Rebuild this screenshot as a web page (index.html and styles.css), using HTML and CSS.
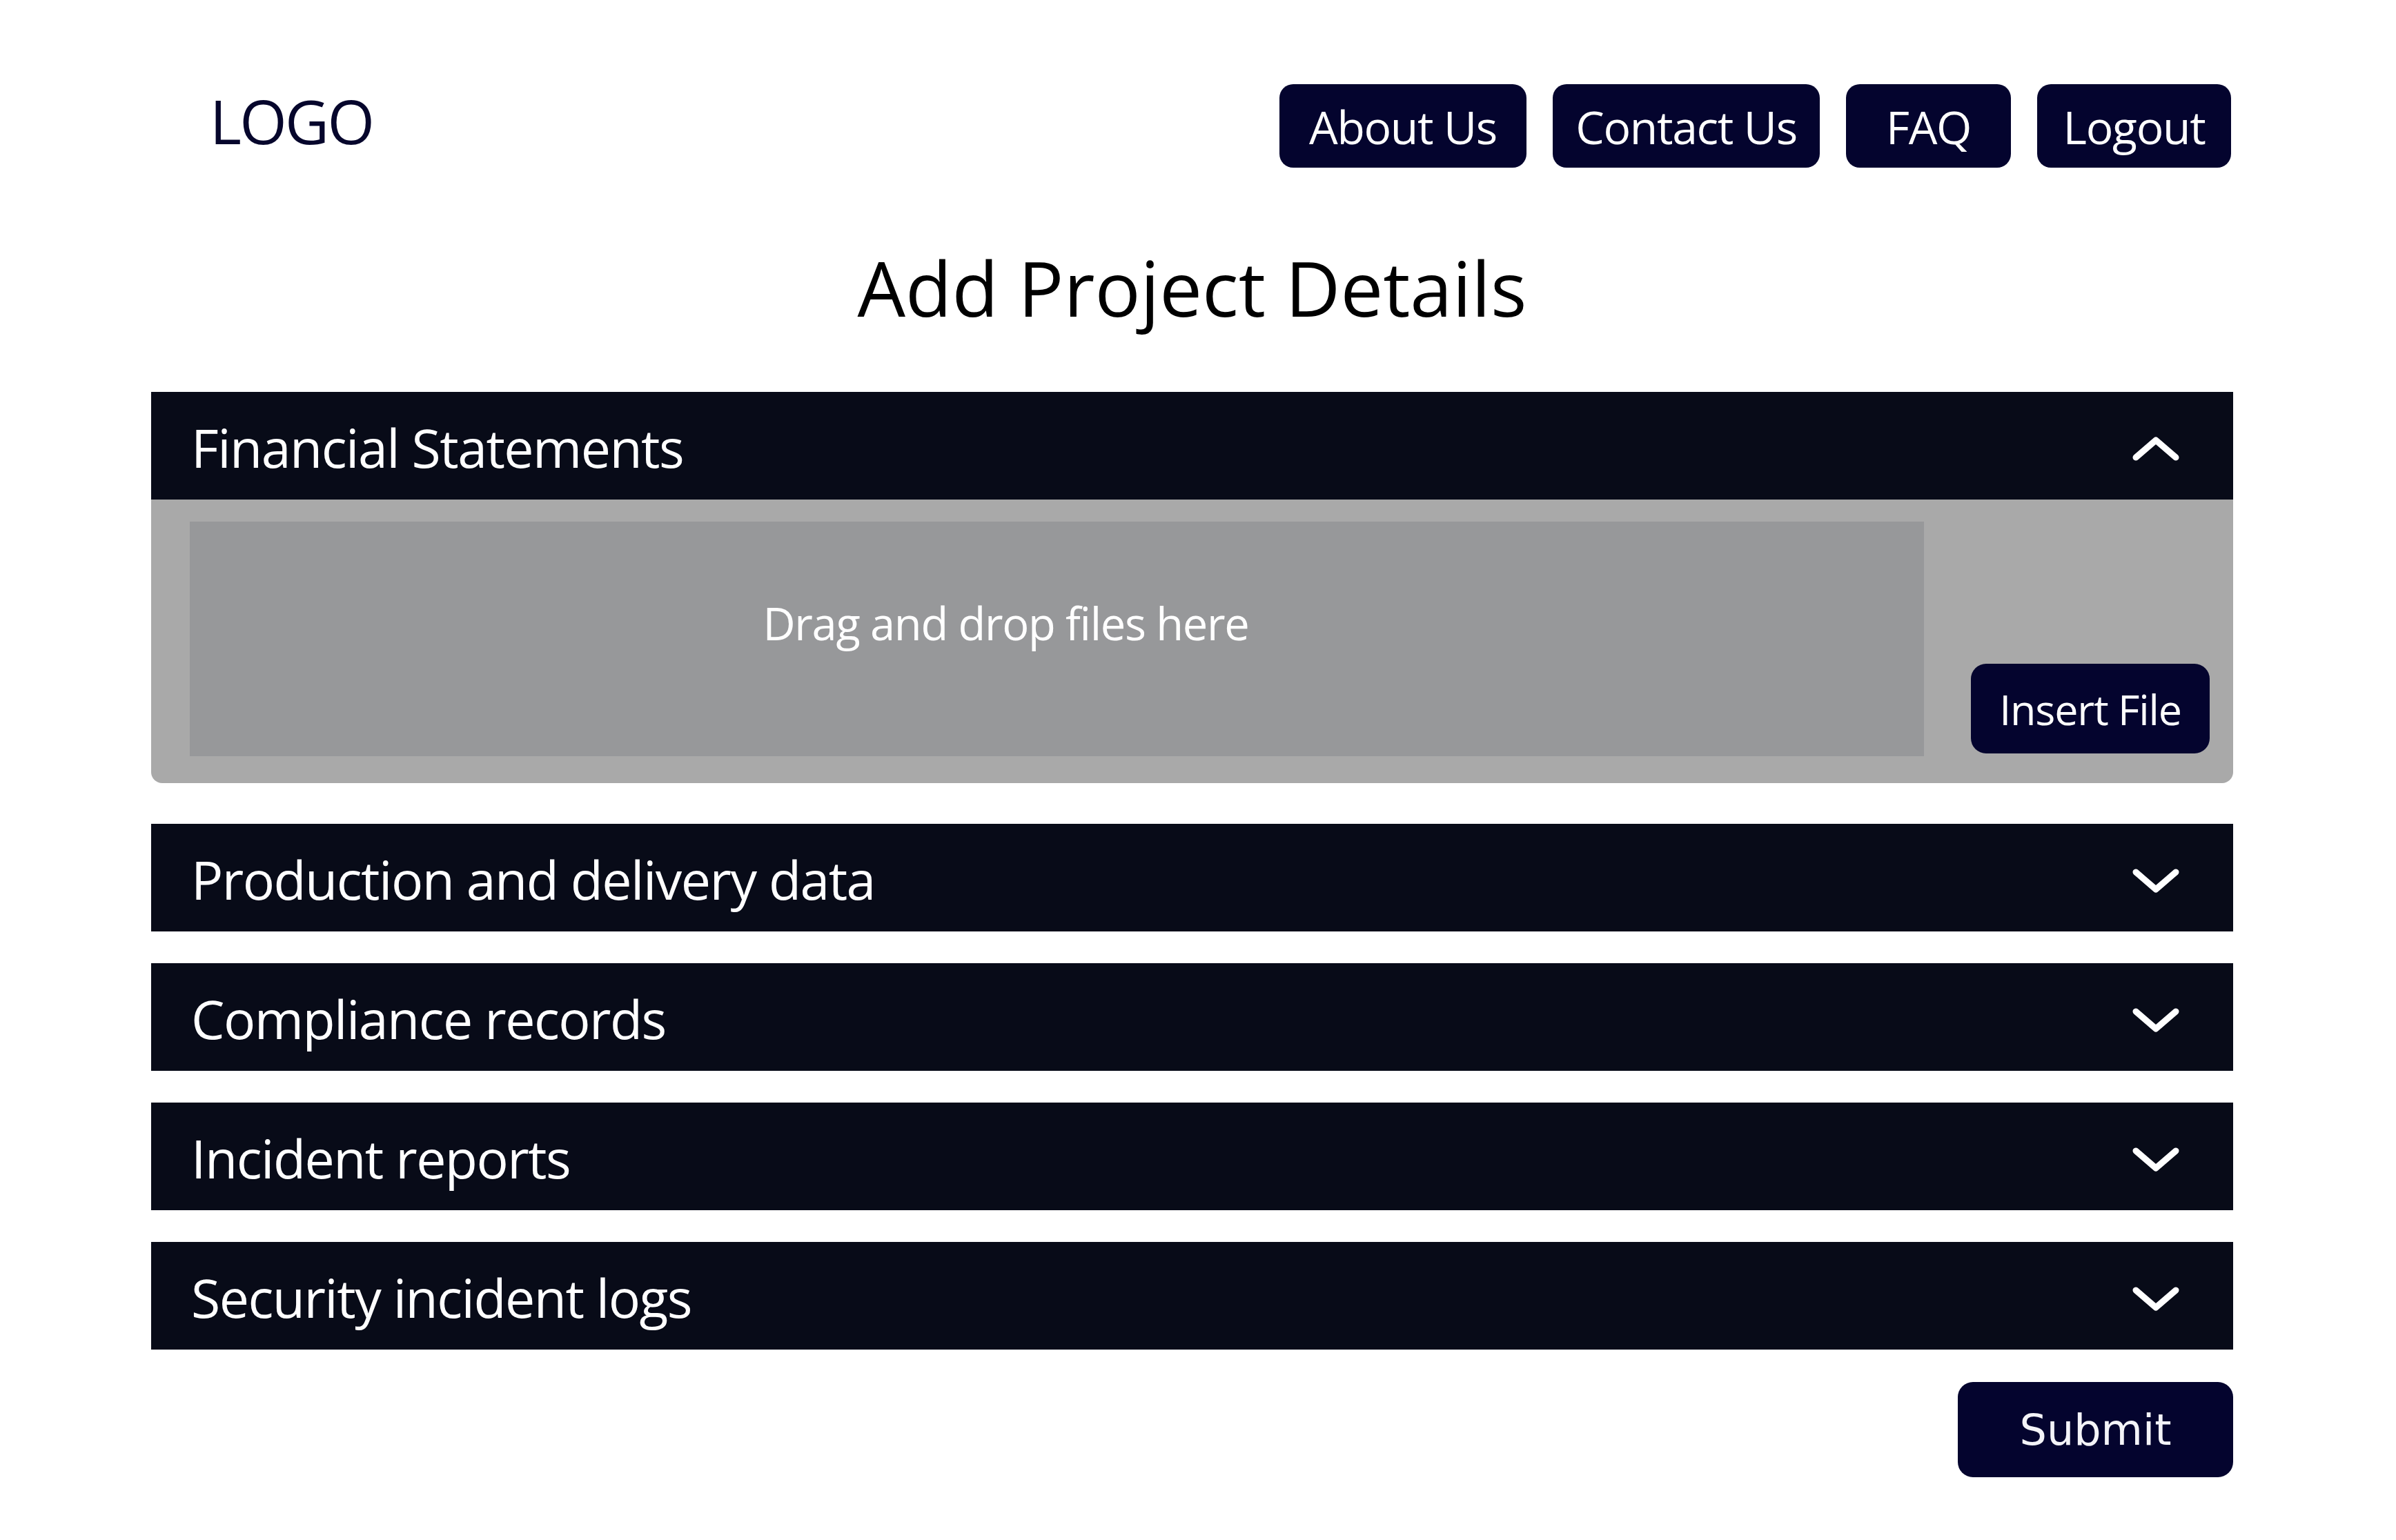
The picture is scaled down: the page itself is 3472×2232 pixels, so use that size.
FILE: index.html
```html
<!DOCTYPE html>
<html lang="en">
<head>
  <meta charset="utf-8">
  <meta name="viewport" content="width=device-width, initial-scale=1.0">
  <title>Add Project Details</title>
  <link rel="stylesheet" href="styles.css">
</head>
<body>
  <div class="page">
    <header class="top-bar">
      <div class="logo">LOGO</div>
      <nav class="nav">
        <a class="nav-btn nav-about" href="#">About Us</a>
        <a class="nav-btn nav-contact" href="#">Contact Us</a>
        <a class="nav-btn nav-faq" href="#">FAQ</a>
        <a class="nav-btn nav-logout" href="#">Logout</a>
      </nav>
    </header>

    <h1 class="page-title">Add Project Details</h1>

    <div class="accordion">
      <section class="acc-item open">
        <div class="acc-header">
          <span class="acc-title">Financial Statements</span>
          <svg class="chevron" viewBox="0 0 68 35" aria-hidden="true">
            <polyline points="5,30 34,5 63,30"/>
          </svg>
        </div>
        <div class="acc-panel">
          <div class="dropzone"><span>Drag and drop files here</span></div>
          <button class="insert-btn" type="button">Insert File</button>
        </div>
      </section>

      <section class="acc-item">
        <div class="acc-header">
          <span class="acc-title">Production and delivery data</span>
          <svg class="chevron" viewBox="0 0 68 35" aria-hidden="true">
            <polyline points="5,5 34,30 63,5"/>
          </svg>
        </div>
      </section>

      <section class="acc-item">
        <div class="acc-header">
          <span class="acc-title">Compliance records</span>
          <svg class="chevron" viewBox="0 0 68 35" aria-hidden="true">
            <polyline points="5,5 34,30 63,5"/>
          </svg>
        </div>
      </section>

      <section class="acc-item">
        <div class="acc-header">
          <span class="acc-title">Incident reports</span>
          <svg class="chevron" viewBox="0 0 68 35" aria-hidden="true">
            <polyline points="5,5 34,30 63,5"/>
          </svg>
        </div>
      </section>

      <section class="acc-item">
        <div class="acc-header">
          <span class="acc-title">Security incident logs</span>
          <svg class="chevron" viewBox="0 0 68 35" aria-hidden="true">
            <polyline points="5,5 34,30 63,5"/>
          </svg>
        </div>
      </section>
    </div>

    <div class="actions">
      <button class="submit-btn" type="submit">Submit</button>
    </div>
  </div>
</body>
</html>
```

FILE: styles.css
```css
:root {
  --primary-font: "Open Sans", "Noto Sans", sans-serif;
  --navy: #04042e;
  --bar-bg: #080b18;
  --panel-bg: #a9a9a9;
  --drop-bg: #97989a;
}

* {
  box-sizing: border-box;
  margin: 0;
  padding: 0;
}

body {
  font-family: var(--primary-font);
  background-color: #ffffff;
  color: #000;
}

.page {
  padding: 122px 236px 0 219px;
}

/* top bar */
.top-bar {
  display: flex;
  justify-content: space-between;
  align-items: center;
  height: 121px;
}

.logo {
  font-size: 88px;
  line-height: 1;
  letter-spacing: -0.03em;
  color: #06062c;
  margin-left: 85px;
  margin-bottom: 16px;
}

.nav {
  display: flex;
  gap: 38px;
  margin-right: 3px;
}

.nav-btn {
  display: flex;
  align-items: center;
  justify-content: center;
  height: 121px;
  border-radius: 20px;
  background-color: var(--navy);
  color: #fff;
  text-decoration: none;
  font-size: 66px;
  line-height: 1;
  letter-spacing: -0.02em;
}

.nav-about { width: 358px; }
.nav-contact { width: 387px; }
.nav-faq { width: 239px; }
.nav-logout { width: 281px; }

.page-title {
  margin: 107px 0 86px;
  text-align: center;
  font-size: 110px;
  font-weight: 400;
  line-height: 1.2;
  color: #000;
}

/* accordion */
.accordion {
  display: flex;
  flex-direction: column;
  gap: 46px;
}

.acc-header {
  display: flex;
  justify-content: space-between;
  align-items: center;
  height: 156px;
  padding: 0 78px 0 58px;
  background-color: var(--bar-bg);
  color: #fff;
}

.acc-title {
  font-size: 77px;
  line-height: 1;
  letter-spacing: -0.02em;
  margin-top: 4px;
}

.chevron {
  width: 68px;
  height: 35px;
  margin-top: 8px;
  fill: none;
  stroke: #fff;
  stroke-width: 9;
  stroke-linecap: round;
  stroke-linejoin: round;
}

.acc-panel {
  display: flex;
  align-items: flex-end;
  gap: 68px;
  padding: 32px 34px 39px 56px;
  margin-bottom: 13px;
  background-color: var(--panel-bg);
  border-radius: 0 0 16px 16px;
}

.dropzone {
  flex: 1;
  display: flex;
  align-items: center;
  justify-content: center;
  height: 340px;
  padding: 0 148px 46px 0;
  background-color: var(--drop-bg);
  color: #fff;
  font-size: 65px;
  line-height: 1;
  letter-spacing: -0.02em;
}

.insert-btn {
  width: 346px;
  height: 130px;
  margin-bottom: 4px;
  border: none;
  border-radius: 22px;
  background-color: var(--navy);
  color: #fff;
  font-family: var(--primary-font);
  font-size: 61px;
  letter-spacing: -0.02em;
}

.actions {
  display: flex;
  justify-content: flex-end;
  margin-top: 47px;
}

.submit-btn {
  width: 399px;
  height: 138px;
  border: none;
  border-radius: 22px;
  background-color: var(--navy);
  color: #f4f4f8;
  font-family: "DejaVu Sans", sans-serif;
  font-size: 62px;
}
```
